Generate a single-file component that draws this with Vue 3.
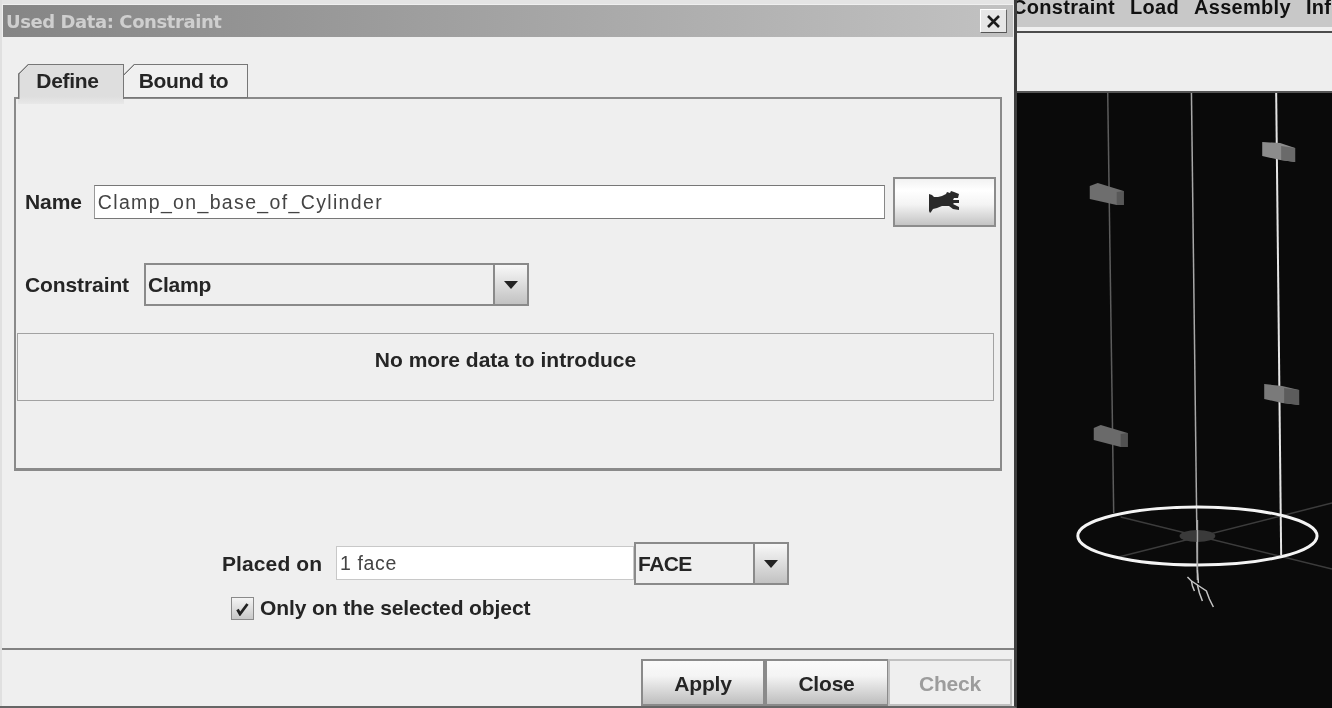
<script setup>
const cylinderLines = [
  { x1: 1107, y1: 93, x2: 1113, y2: 513, stroke: '#5c5c5c', width: 1.5 },
  { x1: 1191, y1: 93, x2: 1197, y2: 580, stroke: '#a8a8a8', width: 1.5 },
  { x1: 1276, y1: 93, x2: 1281, y2: 555, stroke: '#e4e4e4', width: 2 },
  { x1: 1120, y1: 517, x2: 1332, y2: 569, stroke: '#3c3c3c', width: 1.5 },
  { x1: 1118, y1: 557, x2: 1332, y2: 503, stroke: '#3c3c3c', width: 1.5 },
]
const blocks = [
  { body: '1089,186 1097,183 1123,191 1123,205 1116,205 1089,199', end: '1116,192 1123,191 1123,205 1116,205', fill: '#6e6e6e', shade: '#585858' },
  { body: '1262,142 1280,143 1295,148 1295,162 1280,160 1262,156', end: '1281,146 1295,148 1295,162 1281,160', fill: '#8c8c8c', shade: '#6a6a6a' },
  { body: '1093,428 1100,425 1127,433 1127,447 1120,447 1093,440', end: '1120,434 1127,433 1127,447 1120,447', fill: '#6a6a6a', shade: '#525252' },
  { body: '1264,384 1282,386 1299,390 1299,405 1282,403 1264,399', end: '1284,388 1299,390 1299,405 1284,403', fill: '#7a7a7a', shade: '#5c5c5c' },
]
const arrows = [
  '1187,577 1191,581 1192,586 1194,591',
  '1191,581 1197,585 1199,593 1202,601',
  '1197,585 1206,591 1209,599 1213,607',
  '1197,570 1198,583',
]
</script>

<template>
  <div class="screen">
    <section class="dialog">
      <header class="titlebar">
        <span class="title">Used Data: Constraint</span>
        <button class="close-btn">
          <svg width="15" height="15" viewBox="0 0 15 15"><path d="M2 2 13 13M13 2 2 13" stroke="#1c1c1c" stroke-width="2.6" fill="none" /></svg>
        </button>
      </header>

      <div class="tabs">
        <div class="tab active">Define</div>
        <div class="tab">Bound to</div>
      </div>

      <div class="panel">
        <div class="name-row">
          <label class="label">Name</label>
          <div class="field name-field">Clamp_on_base_of_Cylinder</div>
          <button class="icon-btn">
            <svg width="30" height="22" viewBox="0 0 30 22"><path d="M0 3 3 4 5 6 9 6 13 5 17 3 18 1 21 2 22 0 25 1 30 3 29 7 25 7 24 9 30 9 30 12 25 12 24 13 30 16 30 19 24 18 20 15 13 15 8 17 4 18 2 21 1 22 0 20Z" fill="#2a2a2a" /></svg>
          </button>
        </div>
        <div class="constraint-row">
          <label class="label">Constraint</label>
          <div class="combo constraint-combo">
            <span class="combo-value">Clamp</span>
            <span class="combo-arrow"><i class="triangle"></i></span>
          </div>
        </div>
        <div class="info">No more data to introduce</div>
      </div>

      <div class="placement">
        <div class="placed-row">
          <label class="label">Placed on</label>
          <div class="field placed-field">1 face</div>
          <div class="combo placed-combo">
            <span class="combo-value">FACE</span>
            <span class="combo-arrow"><i class="triangle"></i></span>
          </div>
        </div>
        <div class="check-row">
          <span class="checkbox">
            <svg width="15" height="15" viewBox="0 0 15 15"><path d="M2.5 8.5 5 13 12.5 3" stroke="#222" stroke-width="2.8" fill="none" /></svg>
          </span>
          <span class="label">Only on the selected object</span>
        </div>
      </div>

      <footer class="footer">
        <button class="action">Apply</button>
        <button class="action">Close</button>
        <button class="action disabled">Check</button>
      </footer>
    </section>

    <section class="app">
      <nav class="menu">
        <span>Constraint</span>
        <span>Load</span>
        <span>Assembly</span>
        <span>Info</span>
      </nav>
      <div class="toolbar"></div>
      <svg class="viewport" viewBox="1016 93 316 615" preserveAspectRatio="none">
        <line v-for="(l, i) in cylinderLines" :key="i" :x1="l.x1" :y1="l.y1" :x2="l.x2" :y2="l.y2" :stroke="l.stroke" :stroke-width="l.width" />
        <g v-for="(b, i) in blocks" :key="'b' + i">
          <polygon :points="b.body" :fill="b.fill" />
          <polygon :points="b.end" :fill="b.shade" />
        </g>
        <ellipse cx="1197" cy="536" rx="120" ry="29" fill="none" stroke="#f4f4f4" stroke-width="3" />
        <ellipse cx="1197" cy="536" rx="18" ry="6" fill="#3a3a3a" />
        <line x1="1197" y1="520" x2="1197" y2="570" stroke="#a8a8a8" stroke-width="1.5" />
        <polyline v-for="(a, i) in arrows" :key="'a' + i" :points="a" fill="none" stroke="#c4c4c4" stroke-width="1.5" />
      </svg>
    </section>
  </div>
</template>

<style>
html, body { margin: 0; background: #0a0a0a; overflow: hidden; }
</style>

<style scoped>
.screen {
  width: 1332px;
  height: 708px;
  display: flex;
  overflow: hidden;
  font-family: "Liberation Sans", Arial, sans-serif;
  color: #252525;
  filter: blur(0.35px);
}
.dialog {
  position: relative;
  z-index: 1;
  box-sizing: border-box;
  flex: 0 0 1017px;
  height: 708px;
  padding: 5px 1px 0 3px;
  background: #efefef;
  border-right: 3px solid #3e3e3e;
  border-bottom: 2px solid #666;
  box-shadow: inset 2px 0 0 #e0e0e0, inset 0 4px 0 #e4e4e4;
  display: flex;
  flex-direction: column;
}
.titlebar {
  flex: 0 0 32px;
  display: flex;
  align-items: center;
  justify-content: space-between;
  padding: 0 6px 0 3px;
  background: linear-gradient(90deg, #858585, #c2c2c2);
}
.title {
  font: bold 18px "DejaVu Sans", sans-serif;
  letter-spacing: -0.42px;
  color: #cfcfcf;
}
.close-btn {
  width: 27px;
  height: 24px;
  padding: 0;
  display: flex;
  align-items: center;
  justify-content: center;
  background: #e6e6e6;
  border: 1px solid;
  border-color: #fff #666 #555 #fff;
}
.tabs {
  display: flex;
  margin: 27px 0 0 15px;
  height: 34px;
  position: relative;
  z-index: 1;
}
.tab {
  box-sizing: border-box;
  width: 124px;
  height: 34px;
  padding-right: 4px;
  text-align: center;
  font: bold 21px/32px "Liberation Sans", sans-serif;
  letter-spacing: -0.3px;
  border: solid #777;
  border-width: 1.5px 1.5px 1px 0;
  clip-path: polygon(10px 0, 100% 0, 100% 100%, 0 100%, 0 10px);
  background: linear-gradient(135deg, #777 7.5px, transparent 7.5px), #f0f0f0;
}
.tab.active {
  width: 106px;
  height: 40px;
  padding-right: 7px;
  border-width: 1.5px 0 0 0;
  background:
    linear-gradient(135deg, #777 7.5px, transparent 7.5px),
    linear-gradient(#777, #777) left top / 1.5px 34px no-repeat,
    linear-gradient(#777, #777) right top / 1.5px 34px no-repeat,
    linear-gradient(#dedede 80%, #e8e8e8);
}
.panel {
  box-sizing: border-box;
  width: 988px;
  height: 374px;
  margin: -1px 0 0 11px;
  border: 2px solid #8a8a8a;
  border-bottom-width: 3px;
  padding: 78px 4px 0 1px;
}
.label {
  font-size: 21px;
  font-weight: bold;
  letter-spacing: -0.1px;
  white-space: nowrap;
}
.field {
  box-sizing: border-box;
  background: #fff;
  border: 1px solid #a8a8a8;
  font: 19.5px "Liberation Sans", sans-serif;
  letter-spacing: 1.35px;
  color: #444;
  display: flex;
  align-items: center;
  padding-left: 3px;
}
.name-row {
  display: flex;
  align-items: center;
  height: 50px;
  padding-left: 8px;
}
.name-field {
  width: 791px;
  height: 34px;
  margin-left: 12px;
  border-color: #777 #888 #777 #999;
}
.icon-btn {
  box-sizing: border-box;
  flex: 0 0 103px;
  height: 50px;
  margin-left: 8px;
  padding: 0;
  display: flex;
  align-items: center;
  justify-content: center;
  border: 2px solid #8c8c8c;
  background: linear-gradient(#f2f2f2, #fff 25%, #f4f4f4 55%, #c4c4c4);
}
.constraint-row {
  display: flex;
  align-items: center;
  height: 43px;
  margin-top: 36px;
  padding-left: 8px;
}
.combo {
  box-sizing: border-box;
  display: flex;
  border: 2px solid #8a8a8a;
  background: #efefef;
  font-size: 21px;
  font-weight: bold;
  letter-spacing: -0.2px;
}
.combo-value {
  flex: 1;
  padding-left: 2px;
  display: flex;
  align-items: center;
}
.combo-arrow {
  flex: 0 0 32px;
  border-left: 2px solid #8a8a8a;
  display: flex;
  align-items: center;
  justify-content: center;
  background: linear-gradient(#f8f8f8, #c2c2c2);
}
.triangle {
  width: 0;
  height: 0;
  border: 7.5px solid transparent;
  border-top: 8px solid #222;
  border-bottom: 0;
}
.constraint-combo {
  width: 385px;
  height: 43px;
  margin-left: 15px;
}
.info {
  box-sizing: border-box;
  height: 68px;
  margin: 27px 2px 0 0;
  padding-top: 14px;
  border: 1.5px solid #a2a2a2;
  text-align: center;
  font-size: 21px;
  font-weight: bold;
  letter-spacing: 0;
}
.placement {
  flex: 1;
  padding-left: 219px;
}
.placed-row {
  display: flex;
  align-items: flex-start;
  margin-top: 71px;
}
.placed-row .label {
  line-height: 43px;
  letter-spacing: 0.1px;
}
.placed-field {
  width: 298px;
  height: 34px;
  margin: 4px 0 0 14px;
  border-color: #c8c8c8;
  letter-spacing: 0.6px;
}
.placed-combo {
  width: 155px;
  height: 43px;
  letter-spacing: -0.6px;
}
.check-row {
  display: flex;
  align-items: center;
  gap: 6px;
  margin: 11px 0 0 9px;
}
.checkbox {
  box-sizing: border-box;
  width: 23px;
  height: 23px;
  display: flex;
  align-items: center;
  justify-content: center;
  border: 1.5px solid #8a8a8a;
  background: linear-gradient(#f4f4f4, #c8c8c8);
}
.footer {
  flex: 0 0 57px;
  margin: 0 -1px 0 -1px;
  box-sizing: border-box;
  border-top: 2px solid #828282;
  padding: 9px 0 0 639px;
  display: flex;
  align-items: flex-start;
}
.action {
  box-sizing: border-box;
  width: 124px;
  height: 47px;
  margin-right: -0.5px;
  padding: 2px 0 0;
  border: 2px solid #8a8a8a;
  background: linear-gradient(#fafafa, #f4f4f4 35%, #bebebe);
  font: bold 21px "Liberation Sans", sans-serif;
  letter-spacing: -0.2px;
  color: #252525;
}
.action.disabled {
  background: #efefef;
  border-color: #c0c0c0;
  color: #9c9c9c;
}
.app {
  flex: 1;
  min-width: 0;
  display: flex;
  flex-direction: column;
  background: #0a0a0a;
}
.menu {
  box-sizing: border-box;
  flex: 0 0 33px;
  margin-left: -7px;
  padding-left: 2px;
  display: flex;
  gap: 15px;
  align-items: flex-end;
  overflow: hidden;
  background: #c8c8c8;
  border-bottom: 2px solid #4c4c4c;
  box-shadow: inset 0 -4px 0 #f0f0f0;
  padding-bottom: 12px;
  font-size: 20px;
  font-weight: bold;
  letter-spacing: 0.3px;
  color: #111;
  white-space: nowrap;
}
.toolbar {
  flex: 0 0 60px;
  background: #eeeeee;
  border-bottom: 2px solid #555;
  box-sizing: border-box;
}
.viewport {
  display: block;
  flex: 1;
  width: 100%;
  min-height: 0;
  background: #0a0a0a;
}
</style>
